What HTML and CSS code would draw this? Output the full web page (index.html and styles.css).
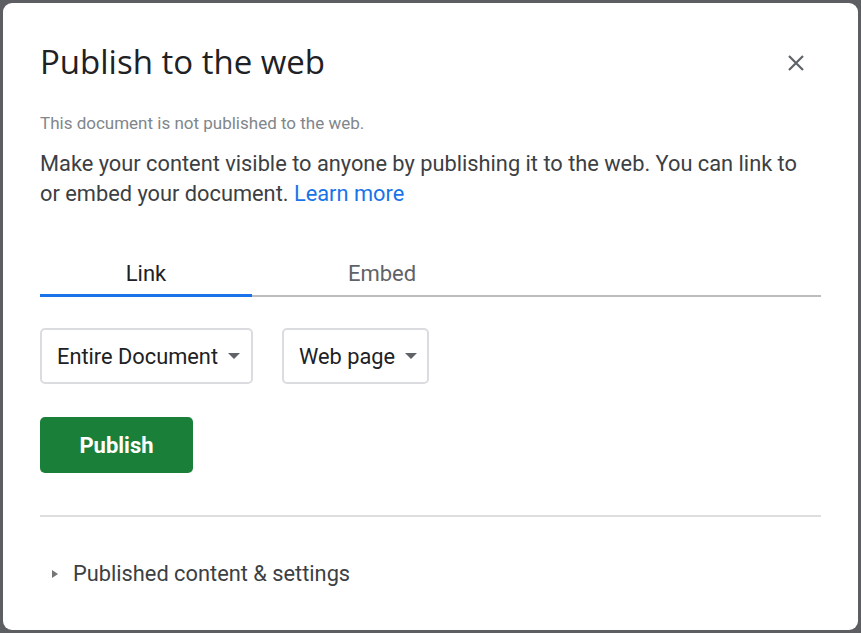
FILE: index.html
```html
<!DOCTYPE html>
<html>
<head>
<meta charset="utf-8">
<title>Publish to the web</title>
<link rel="stylesheet" href="styles.css">
</head>
<body>
<div class="backdrop">
  <div class="dialog">
    <div class="header">
      <h1 class="title">Publish to the web</h1>
      <button class="close" aria-label="Close">
        <svg width="18" height="18" viewBox="0 0 18 18"><path d="M2 2 L16 16 M16 2 L2 16" stroke="#5f6368" stroke-width="2.2" fill="none"/></svg>
      </button>
    </div>
    <p class="status">This document is not published to the web.</p>
    <p class="desc">Make your content visible to anyone by publishing it to the web. You can link to or embed your document. <a class="link" href="#">Learn more</a></p>
    <div class="tabs">
      <div class="tab tab-active">Link</div>
      <div class="tab">Embed</div>
    </div>
    <div class="selects">
      <div class="select select-doc">Entire Document <span class="caret"></span></div>
      <div class="select select-fmt">Web page <span class="caret"></span></div>
    </div>
    <button class="publish">Publish</button>
    <div class="divider"></div>
    <div class="disclosure"><span class="tri"></span>Published content &amp; settings</div>
  </div>
</div>
</body>
</html>
```
FILE: styles.css
```css
html, body {
  margin: 0;
  padding: 0;
  background: #5c5e61;
}
.backdrop {
  padding: 3px;
  width: 861px;
  height: 633px;
  box-sizing: border-box;
}
.dialog {
  width: 855px;
  height: 627px;
  box-sizing: border-box;
  background: #fff;
  border-radius: 9px;
  padding: 39px 37px 0 37px;
  font-family: Roboto, "Liberation Sans", sans-serif;
  color: #3c4043;
}
.header {
  display: flex;
  align-items: center;
  justify-content: space-between;
  height: 40px;
}
.title {
  margin: 0;
  font-family: "Open Sans", Roboto, sans-serif;
  font-weight: 400;
  font-size: 33px;
  line-height: 40px;
  color: #202124;
}
.close {
  border: 0;
  background: none;
  padding: 0;
  width: 18px;
  height: 18px;
  margin-right: 16px;
  margin-top: 1px;
  display: flex;
}
.status {
  margin: 30px 0 0 0;
  font-size: 17px;
  line-height: 22px;
  color: #80868b;
}
.desc {
  margin: 15px 0 0 0;
  font-size: 21.8px;
  line-height: 30px;
  color: #3c4043;
}
.link {
  color: #1a73e8;
  text-decoration: none;
}
.tabs {
  margin-top: 49px;
  display: flex;
  border-bottom: 2px solid #bdbdbd;
}
.tab {
  width: 212px;
  text-align: center;
  font-size: 22px;
  line-height: 30px;
  padding-top: 1px;
  padding-bottom: 5px;
  color: #5f6368;
  margin-bottom: -2px;
  border-bottom: 3px solid transparent;
}
.tab + .tab {
  width: 260px;
}
.tab-active {
  color: #202124;
  border-bottom-color: #1a73e8;
}
.selects {
  display: flex;
  gap: 29px;
  margin-top: 31px;
}
.select {
  height: 56px;
  box-sizing: border-box;
  border: 2px solid #dadce0;
  border-radius: 5px;
  display: flex;
  align-items: center;
  gap: 10px;
  font-size: 21.8px;
  color: #202124;
}
.select-doc {
  width: 213px;
  padding: 0 0 0 15px;
}
.select-fmt {
  width: 147px;
  padding: 0 0 0 15px;
}
.caret {
  width: 0;
  height: 0;
  border-left: 6px solid transparent;
  border-right: 6px solid transparent;
  border-top: 6px solid #5f6368;
}
.publish {
  display: block;
  margin-top: 33px;
  width: 153px;
  height: 56px;
  border: 0;
  border-radius: 5px;
  background: #1a8039;
  color: #fff;
  font-family: Roboto, "Liberation Sans", sans-serif;
  font-weight: 700;
  font-size: 22px;
}
.divider {
  margin-top: 42px;
  height: 2px;
  background: #dedede;
}
.disclosure {
  margin-top: 42px;
  display: flex;
  align-items: center;
  font-size: 21.8px;
  line-height: 30px;
  color: #3c4043;
}
.tri {
  width: 0;
  height: 0;
  border-top: 4.5px solid transparent;
  border-bottom: 4.5px solid transparent;
  border-left: 6px solid #757575;
  margin: 0 15px 0 12px;
}
```
